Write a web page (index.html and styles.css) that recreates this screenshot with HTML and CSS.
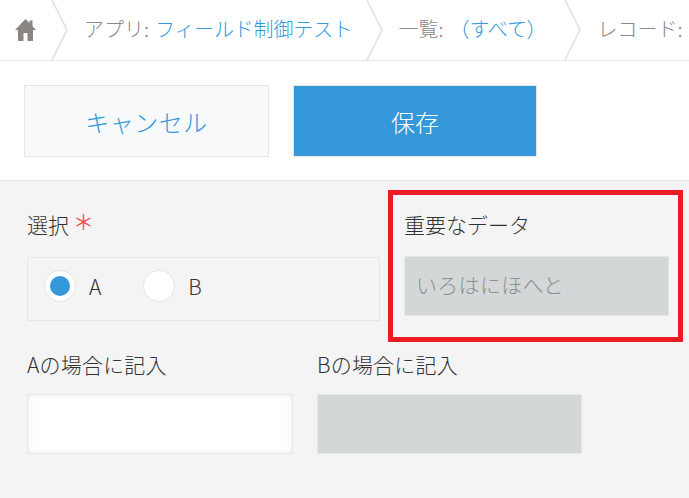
FILE: index.html
```html
<!DOCTYPE html>
<html lang="ja">
<head>
    <meta charset="UTF-8">
    <meta name="viewport" content="width=device-width, initial-scale=1.0">
    <title>レコードの編集</title>
    <link rel="stylesheet" href="styles.css">
</head>
<body>
    <nav class="crumbs">
        <a class="crumb-home" href="#">
            <svg class="home-icon" viewBox="0 0 21 22"><path d="M10.500 0 0 11h3v11h5.500v-8h4v8H18V11h3l-3.500-3.700V1.500h-3v2.600z"/></svg>
        </a>
        <svg class="chevron" viewBox="0 0 17 60"><polyline points="1,0 16,30 1,60"/></svg>
        <div class="crumb">アプリ:<a href="#">フィールド制御テスト</a></div>
        <svg class="chevron" viewBox="0 0 17 60"><polyline points="1,0 16,30 1,60"/></svg>
        <div class="crumb crumb-list">一覧:<a href="#">（すべて）</a></div>
        <svg class="chevron" viewBox="0 0 17 60"><polyline points="1,0 16,30 1,60"/></svg>
        <div class="crumb">レコード:</div>
    </nav>

    <div class="toolbar">
        <button class="btn btn-cancel">キャンセル</button>
        <button class="btn btn-save">保存</button>
    </div>

    <div class="form">
        <div class="row">
            <div class="field field-radio">
                <div class="label">選択<span class="required">＊</span></div>
                <div class="radio-box">
                    <label class="radio"><span class="radio-mark checked"></span>A</label>
                    <label class="radio"><span class="radio-mark"></span>B</label>
                </div>
            </div>
            <div class="field field-text">
                <div class="label">重要なデータ</div>
                <div class="input disabled">いろはにほへと</div>
            </div>
        </div>
        <div class="row row-second">
            <div class="field field-half">
                <div class="label">Aの場合に記入</div>
                <div class="input"></div>
            </div>
            <div class="field field-text">
                <div class="label">Bの場合に記入</div>
                <div class="input disabled"></div>
            </div>
        </div>
        <div class="highlight"></div>
    </div>
</body>
</html>
```

FILE: styles.css
```css
*{
    padding: 0;
    margin: 0;
    box-sizing: border-box;
}
html,body{
    height: 100%;
    overflow: hidden;
}
body{
    background-color: #f4f4f4;
    color: #333;
    font-family: "Noto Sans CJK JP", "Liberation Sans", sans-serif;
    font-weight: 300;
    font-size: 21px;
}
a{
    color: #3498db;
    text-decoration: none;
}

/* breadcrumb */
.crumbs{
    height: 61px;
    display: flex;
    align-items: flex-start;
    background-color: #fff;
    border-bottom: 1px solid #e3e7e8;
    white-space: nowrap;
    overflow: hidden;
    font-size: 20px;
}
.crumb-home{
    flex: none;
    display: flex;
    width: 51px;
    padding: 19px 0 0 15px;
}
.home-icon{
    width: 21px;
    height: 22px;
    fill: #8a8582;
}
.chevron{
    flex: none;
    width: 17px;
    height: 60px;
    fill: none;
    stroke: #e3e7e8;
    stroke-width: 2;
}
.crumb{
    flex: none;
    padding: 0 13px 0 16px;
    color: #888;
    line-height: 58px;
}
.crumb a{
    margin-left: 6px;
    letter-spacing: -0.2px;
}
.crumb-list{
    padding-right: 18px;
}

/* buttons */
.toolbar{
    height: 120px;
    display: flex;
    gap: 24px;
    padding: 24px 0 0 24px;
    background-color: #fff;
    border-bottom: 1px solid #e3e7e8;
}
.btn{
    width: 245px;
    height: 72px;
    border: 1px solid #e3e7e8;
    font-family: inherit;
    font-weight: 300;
    font-size: 24px;
}
.btn-cancel{
    background-color: #f7f9fa;
    color: #3498db;
    letter-spacing: 0.5px;
}
.btn-save{
    width: 244px;
    background-color: #3498db;
    color: #fff;
}

/* form */
.form{
    position: relative;
    padding: 31px 0 0 27px;
}
.row{
    display: flex;
    gap: 24px;
}
.row-second{
    margin-top: 31px;
}
.label{
    height: 28px;
    line-height: 24px;
    margin-bottom: 16px;
}
.row-second .label{
    margin-bottom: 14px;
    letter-spacing: 0.2px;
}
.required{
    color: #ef5350;
    margin-left: 4px;
    font-weight: 400;
    position: relative;
    top: -3px;
}
.field-radio{
    width: 353px;
}
.field-text{
    width: 265px;
}
.field-half{
    width: 266px;
}
.radio-box{
    height: 64px;
    margin-top: 17px;
    display: flex;
    align-items: center;
    gap: 42px;
    padding: 0 0 6px 16px;
    border: 1px solid #e3e7e8;
}
.field-radio .label{
    margin-bottom: 0;
}
.radio{
    display: flex;
    align-items: center;
    gap: 13px;
    line-height: 28px;
}
.radio-mark{
    width: 32px;
    height: 32px;
    display: flex;
    align-items: center;
    justify-content: center;
    background-color: #fff;
    border: 1px solid #e3e7e8;
    border-radius: 50%;
}
.radio-mark.checked::after{
    content: "";
    width: 20px;
    height: 20px;
    border-radius: 50%;
    background-color: #3498db;
}
.input{
    height: 60px;
    padding-left: 11px;
    line-height: 55px;
    letter-spacing: 0.3px;
    background-color: #fff;
    border: 1px solid #e3e7e8;
    box-shadow: inset 0 0 8px #eceef1;
}
.input.disabled{
    background-color: #d4d7d7;
    color: #8c8f93;
    box-shadow: none;
}

/* red annotation drawn over the screenshot */
.highlight{
    position: absolute;
    left: 388px;
    top: 9px;
    width: 295px;
    height: 152px;
    border: 5px solid #ed1c24;
}
```
